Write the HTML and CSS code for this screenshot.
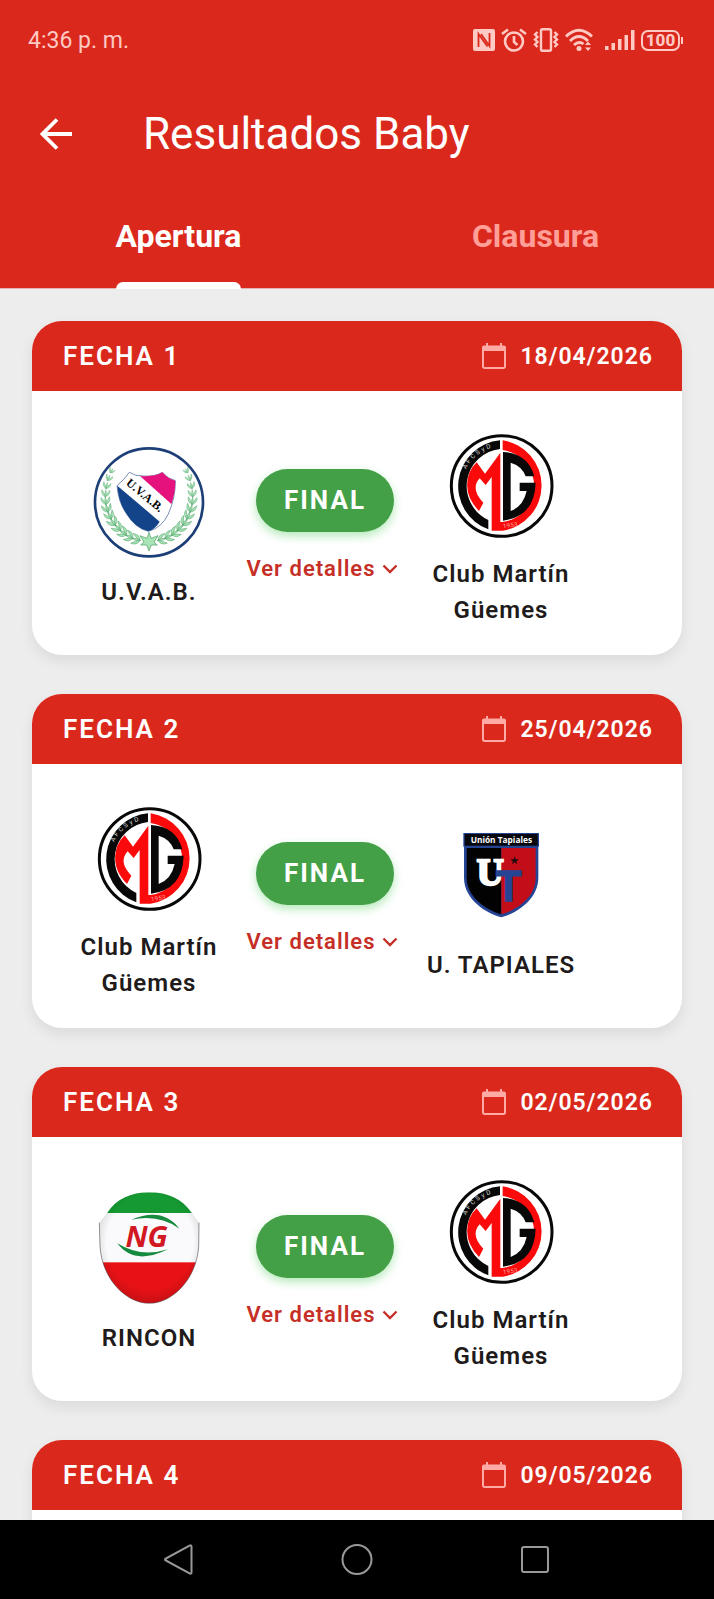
FILE: index.html
```html
<!DOCTYPE html>
<html lang="es">
<head>
    <meta charset="UTF-8">
    <meta name="viewport" content="width=device-width, initial-scale=1.0">
    <title>Resultados Baby</title>
    <link rel="stylesheet" href="styles.css">
</head>
<body>

    <!-- Shared icons -->
    <svg class="sprite" aria-hidden="true">
        <symbol id="calendar" viewBox="0 0 24 26">
            <path d="M1 5h22v18.500a1.500 1.500 0 0 1-1.500 1.500h-19A1.500 1.500 0 0 1 1 23.500z" fill="none" stroke="currentColor" stroke-width="2"/>
            <path d="M0 4.500a2 2 0 0 1 2-2h20a2 2 0 0 1 2 2V8H0zM4 0h2v4H4zM18 0h2v4h-2z" fill="currentColor"/>
        </symbol>

        <symbol id="chevron" viewBox="0 0 16 10">
            <path d="M1.500 1.500 8 8l6.500-6.500" fill="none" stroke="currentColor" stroke-width="2.400"/>
        </symbol>

        <symbol id="leaves" viewBox="0 0 40 30" overflow="visible">
            <g fill="#a9e4b7" stroke="#459b60" stroke-width="1.400">
                <path d="M24 15Q12 11 -1 0Q18 -3 24 15Z"/>
                <path d="M24 15Q12 19 -1 30Q18 33 24 15Z"/>
                <path d="M26 15Q12 21 -2 15Q12 9 26 15Z"/>
            </g>
        </symbol>

        <symbol id="mg-shapes" viewBox="15 8 336 336">
            <circle cx="185" cy="182" r="151" fill="#fff" stroke="#080808" stroke-width="9"/>
            <!-- left band -->
            <path d="M180 45V71A112 112 0 0 0 145 284V312A138 138 0 0 1 180 45Z" fill="#080808"/>
            <!-- right band and M -->
            <path d="M188 45A137 137 0 0 1 188 316H155V155L137 179L119 159Q90 191 130 232L117 257Q66 205 88 142Q96 124 110 111L135 145L181 82V290H188A109 109 0 0 0 188 74Z" fill="#fa0a0a"/>
            <!-- G -->
            <path d="M189 80Q264 84 283 153H257Q246 122 212 112V257Q250 243 260 197H239V172H287Q284 274 189 286Z" fill="#080808"/>
        </symbol>

        <path id="mg-arc" d="M78 132A118 118 0 0 1 182 64" fill="none"/>
    </svg>

    <header class="header">
        <div class="status-bar">
            <span class="clock">4:36 p. m.</span>
            <div class="status-icons">
                <svg width="22" height="22" viewBox="0 0 22 22" aria-hidden="true">
                    <rect width="22" height="22" rx="2" fill="currentColor"/>
                    <path d="M5.500 18V5l9 12.500M8 5l8.500 12V4" fill="none" stroke="#da291c" stroke-width="1.800"/>
                </svg>
                <svg width="26" height="24" viewBox="0 0 26 24" aria-hidden="true">
                    <g fill="none" stroke="currentColor" stroke-width="2.600">
                        <circle cx="13" cy="13.500" r="9"/>
                        <path d="M13 8v6l3.500 3M1 6l6-4.500M25 6l-6-4.500"/>
                    </g>
                </svg>
                <svg width="26" height="24" viewBox="0 0 26 24" aria-hidden="true">
                    <g fill="none" stroke="currentColor" stroke-width="2.400">
                        <rect x="8" y="1.200" width="10" height="21.600" rx="1.500"/>
                        <path d="M4.500 4L2 6.500 4.500 9 2 11.500 4.500 14 2 16.500 4.500 19M21.500 4L24 6.500 21.500 9 24 11.500 21.500 14 24 16.500 21.500 19"/>
                    </g>
                </svg>
                <svg width="28" height="24" viewBox="0 0 28 24" aria-hidden="true">
                    <path d="M1 8.500Q14-4 27 8.500M5 13Q14 4 23 13M9 17Q14 12.500 18.500 16" fill="none" stroke="currentColor" stroke-width="2.800"/>
                    <circle cx="14" cy="20.500" r="2.500" fill="currentColor"/>
                    <path d="M20 17l3-3.500 3 3.500zM20 19.500l3 3.500 3-3.500z" fill="currentColor"/>
                </svg>
                <svg class="signal" width="30" height="20" viewBox="0 0 30 20" aria-hidden="true">
                    <path d="M0 16h3.500v4H0zM6.500 13H10v7H6.500zM13 9h3.500v11H13zM19.500 5H23v15h-3.500zM26 0h3.500v20H26z" fill="currentColor"/>
                </svg>
                <div class="battery">100</div>
            </div>
        </div>

        <div class="app-bar">
            <button class="back" type="button" aria-label="Volver">
                <svg width="32" height="32" viewBox="0 0 32 32" aria-hidden="true">
                    <path d="M32 16H3M17 1.500L2.500 16 17 30.500" fill="none" stroke="currentColor" stroke-width="3.800"/>
                </svg>
            </button>
            <h1>Resultados Baby</h1>
        </div>

        <nav class="tabs">
            <a class="tab active" href="#apertura"><span>Apertura</span></a>
            <a class="tab" href="#clausura"><span>Clausura</span></a>
        </nav>
    </header>

    <main class="results">
        <article class="card">
            <div class="card-header">
                <h2>FECHA 1</h2>
                <div class="date"><svg class="calendar"><use href="#calendar"/></svg>18/04/2026</div>
            </div>
            <div class="match">
                <div class="team">
                    <svg class="crest" viewBox="39 31 336 336">
                        <circle cx="207" cy="200" r="162" fill="#fff" stroke="#1d3f78" stroke-width="8"/>
                        <g id="laurel">
                            <use href="#leaves" x="187" y="302" width="40" height="30" transform="rotate(14 207 190)"/>
                            <use href="#leaves" x="187" y="302" width="40" height="30" transform="rotate(24 207 190)"/>
                            <use href="#leaves" x="187" y="302" width="40" height="30" transform="rotate(34 207 190)"/>
                            <use href="#leaves" x="187" y="302" width="40" height="30" transform="rotate(44 207 190)"/>
                            <use href="#leaves" x="187" y="303" width="40" height="30" transform="rotate(54 207 190)"/>
                            <use href="#leaves" x="187" y="304" width="40" height="28" transform="rotate(64 207 190)"/>
                            <use href="#leaves" x="187" y="305" width="40" height="28" transform="rotate(74 207 190)"/>
                            <use href="#leaves" x="187" y="307" width="38" height="26" transform="rotate(84 207 190)"/>
                            <use href="#leaves" x="187" y="309" width="38" height="24" transform="rotate(94 207 190)"/>
                            <use href="#leaves" x="187" y="312" width="36" height="22" transform="rotate(104 207 190)"/>
                            <use href="#leaves" x="187" y="316" width="34" height="20" transform="rotate(114 207 190)"/>
                            <use href="#leaves" x="187" y="322" width="30" height="17" transform="rotate(123 207 190)"/>
                        </g>
                        <use href="#laurel" transform="matrix(-1 0 0 1 414 0)"/>
                        <path d="M207 290L213 308L234 300L222 319L232 328L214 328L207 346L200 328L182 328L192 319L180 300L201 308Z" fill="#a9e4b7" stroke="#459b60" stroke-width="2"/>
                        <path d="M111 150Q130 135 148 110Q166 122 190 121Q224 124 247 110Q264 130 286 135Q287 185 265 235Q246 276 205 287Q165 277 140 235Q115 200 111 150Z" fill="#fff" stroke="#36558f" stroke-width="2"/>
                        <path d="M180 121Q224 124 247 110Q264 130 286 135Q286 172 274 205Z" fill="#e5127d"/>
                        <path d="M112 150L239 258Q226 280 205 287Q165 277 140 235Q115 200 112 150Z" fill="#134489"/>
                        <text class="uvab-text" transform="translate(136 145) rotate(40)">U.V.A.B.</text>
                    </svg>
                    <p>U.V.A.B.</p>
                </div>
                <div class="status">
                    <span class="badge">FINAL</span>
                    <button class="details" type="button">Ver detalles<svg class="chevron"><use href="#chevron"/></svg></button>
                </div>
                <div class="team">
                    <svg class="crest" viewBox="15 8 336 336">
                        <use href="#mg-shapes" x="15" y="8" width="336" height="336"/>
                        <text class="mg-text"><textPath href="#mg-arc">A F C S y D</textPath></text>
                        <text class="mg-year" transform="translate(190 309) rotate(-8)">1953</text>
                    </svg>
                    <p>Club Martín Güemes</p>
                </div>
            </div>
        </article>

        <article class="card">
            <div class="card-header">
                <h2>FECHA 2</h2>
                <div class="date"><svg class="calendar"><use href="#calendar"/></svg>25/04/2026</div>
            </div>
            <div class="match">
                <div class="team">
                    <svg class="crest" viewBox="15 8 336 336">
                        <use href="#mg-shapes" x="15" y="8" width="336" height="336"/>
                        <text class="mg-text"><textPath href="#mg-arc">A F C S y D</textPath></text>
                        <text class="mg-year" transform="translate(190 309) rotate(-8)">1953</text>
                    </svg>
                    <p>Club Martín Güemes</p>
                </div>
                <div class="status">
                    <span class="badge">FINAL</span>
                    <button class="details" type="button">Ver detalles<svg class="chevron"><use href="#chevron"/></svg></button>
                </div>
                <div class="team">
                    <svg class="crest" viewBox="15 11 336 336">
                        <path d="M70 53H297V94H295V187C295 254 226 295 184 306C142 295 72 254 72 187V94H70Z" fill="#254494"/>
                        <path d="M74 56H293V91H74Z" fill="#06080d"/>
                        <path d="M80 98H184V297C146 286 80 250 80 187Z" fill="#020203"/>
                        <path d="M184 98H287V187C287 250 222 286 184 297Z" fill="#c30d18"/>
                        <text class="tapiales-name" x="184" y="82">Unión Tapiales</text>
                        <text class="tapiales-u" x="151" y="208">U</text>
                        <text class="tapiales-t" x="206" y="256">T</text>
                        <path d="M224 123L227 132H237L229 138L232 147L224 141L216 147L219 138L211 132H221Z" fill="#1b0b10"/>
                    </svg>
                    <p>U. TAPIALES</p>
                </div>
            </div>
        </article>

        <article class="card">
            <div class="card-header">
                <h2>FECHA 3</h2>
                <div class="date"><svg class="calendar"><use href="#calendar"/></svg>02/05/2026</div>
            </div>
            <div class="match">
                <div class="team">
                    <svg class="crest" viewBox="9 36 336 336">
                        <defs>
                            <clipPath id="rincon-shape">
                                <path d="M178 37C235 37 277 58 305 98L327 128L326 200C319 300 245 370 178 370C110 370 37 300 30 200L28 128L52 98C78 58 122 37 178 37Z"/>
                            </clipPath>
                            <radialGradient id="rincon-shade" cx="50%" cy="45%" r="58%">
                                <stop offset="70%" stop-color="#000" stop-opacity="0"/>
                                <stop offset="100%" stop-color="#000" stop-opacity="0.200"/>
                            </radialGradient>
                        </defs>
                        <g clip-path="url(#rincon-shape)">
                            <rect x="20" y="30" width="320" height="70" fill="#159a33"/>
                            <rect x="20" y="99" width="320" height="148" fill="#fafafc"/>
                            <rect x="20" y="247" width="320" height="130" fill="#e81216"/>
                            <rect x="20" y="30" width="320" height="347" fill="url(#rincon-shade)"/>
                        </g>
                        <path d="M28 128L30 200C37 300 110 370 178 370C245 370 319 300 326 200L327 128" fill="none" stroke="#55484a" stroke-opacity="0.600" stroke-width="3"/>
                        <path d="M124 119Q218 80 268 146Q208 102 124 119Z" fill="#168a3e"/>
                        <path d="M82 190Q132 258 234 208Q152 234 82 190Z" fill="#168a3e"/>
                        <text class="rincon-text" x="170" y="200">NG</text>
                    </svg>
                    <p>RINCON</p>
                </div>
                <div class="status">
                    <span class="badge">FINAL</span>
                    <button class="details" type="button">Ver detalles<svg class="chevron"><use href="#chevron"/></svg></button>
                </div>
                <div class="team">
                    <svg class="crest" viewBox="15 8 336 336">
                        <use href="#mg-shapes" x="15" y="8" width="336" height="336"/>
                        <text class="mg-text"><textPath href="#mg-arc">A F C S y D</textPath></text>
                        <text class="mg-year" transform="translate(190 309) rotate(-8)">1953</text>
                    </svg>
                    <p>Club Martín Güemes</p>
                </div>
            </div>
        </article>

        <article class="card">
            <div class="card-header">
                <h2>FECHA 4</h2>
                <div class="date"><svg class="calendar"><use href="#calendar"/></svg>09/05/2026</div>
            </div>
            <div class="match"></div>
        </article>
    </main>

    <footer class="nav-bar">
        <button type="button" aria-label="Atrás">
            <svg width="32" height="32" viewBox="0 0 32 32"><path d="M27 1.500a1 1 0 0 1 1.500 1v26a1 1 0 0 1-1.500 1L3 16.500a1 1 0 0 1 0-2z"/></svg>
        </button>
        <button type="button" aria-label="Inicio">
            <svg width="32" height="32" viewBox="0 0 32 32"><circle cx="16" cy="15.500" r="14.500"/></svg>
        </button>
        <button type="button" aria-label="Recientes">
            <svg width="32" height="32" viewBox="0 0 32 32"><rect x="3" y="3" width="26" height="25" rx="2"/></svg>
        </button>
    </footer>

</body>
</html>
```
FILE: styles.css
```css
/* General Styles */
* {
    box-sizing: border-box;
}

body {
    font-family: Roboto, sans-serif;
    background-color: #ededed;
    color: #201a1a;
    display: flex;
    flex-direction: column;
    height: 100vh;
    margin: 0;
}

h1,
h2,
p {
    margin: 0;
}

button {
    font-family: inherit;
    background: none;
    border: none;
    padding: 0;
    cursor: pointer;
}

.sprite {
    position: absolute;
    width: 0;
    height: 0;
}

/* Header */
.header {
    background-color: #da291c;
    color: #fff;
    border-bottom: 1px solid #e2b5b2;
}

.status-bar {
    display: flex;
    justify-content: space-between;
    align-items: center;
    height: 80px;
    padding: 0 30px 0 28px;
    color: #ffc9c4;
}

.clock {
    font-size: 23px;
}

.status-icons {
    display: flex;
    align-items: center;
    gap: 6px;
}

.signal {
    margin-left: 6px;
}

.battery {
    position: relative;
    width: 39px;
    height: 21px;
    margin-right: 4px;
    border: 2px solid currentColor;
    border-radius: 7px;
    font-size: 17px;
    font-weight: 800;
    line-height: 17px;
    text-align: center;
}

.battery::after {
    content: "";
    position: absolute;
    top: 5px;
    right: -5px;
    width: 2px;
    height: 7px;
    background-color: currentColor;
}

.app-bar {
    display: flex;
    align-items: center;
    gap: 71px;
    height: 108px;
    padding: 0 40px;
}

.back {
    display: flex;
    color: #fff;
}

h1 {
    font-size: 44px;
    font-weight: 400;
}

/* Tabs */
.tabs {
    display: flex;
    height: 100px;
}

.tab {
    flex: 1;
    display: flex;
    justify-content: center;
    color: #ff9f98;
    font-size: 32px;
    font-weight: 700;
    line-height: 96px;
    text-decoration: none;
}

.tab.active {
    color: #fff;
}

.tab.active span {
    position: relative;
}

.tab.active span::after {
    content: "";
    position: absolute;
    left: 0;
    right: 0;
    bottom: -1px;
    height: 7px;
    background-color: #fff;
    border-radius: 7px 7px 0 0;
}

/* Match Cards */
.results {
    flex: 1;
    min-height: 0;
    overflow-y: auto;
    scrollbar-width: none;
    padding: 32px;
}

.card {
    margin-bottom: 39px;
    background-color: #fff;
    border-radius: 30px;
    box-shadow: 0 6px 14px rgba(0, 0, 0, 0.08);
}

.card-header {
    display: flex;
    justify-content: space-between;
    align-items: center;
    height: 70px;
    padding: 0 29px 0 31px;
    background-color: #da291c;
    border-radius: 30px 30px 0 0;
    color: #fff;
}

h2 {
    font-size: 26px;
    font-weight: 600;
    letter-spacing: 2px;
}

.date {
    display: flex;
    align-items: center;
    gap: 14px;
    font-size: 23px;
    font-weight: 600;
    letter-spacing: 1px;
}

.calendar {
    width: 24px;
    height: 26px;
    color: #ffaaa4;
}

.match {
    display: grid;
    grid-template-columns: 11fr 11fr 11fr 4fr;
    align-items: center;
    min-height: 264px;
    padding: 37px 29px 27px;
}

.team,
.status {
    display: flex;
    flex-direction: column;
    align-items: center;
}

.team {
    gap: 16px;
    padding: 0 12px;
    font-size: 24px;
    font-weight: 600;
    letter-spacing: 1px;
    line-height: 36px;
    text-align: center;
}

.crest {
    width: 112px;
    height: 112px;
}

.status {
    gap: 19px;
}

.badge {
    padding: 0 28px;
    background-color: #43a047;
    border-radius: 32px;
    box-shadow: 0 4px 10px rgba(67, 200, 80, 0.4);
    color: #fff;
    font-size: 26px;
    font-weight: 700;
    letter-spacing: 2px;
    line-height: 63px;
}

.details {
    display: flex;
    align-items: center;
    gap: 6px;
    padding-right: 6px;
    color: #c62f27;
    font-size: 22px;
    font-weight: 600;
    letter-spacing: 1px;
    line-height: 36px;
    white-space: nowrap;
}

.chevron {
    width: 16px;
    height: 10px;
}

/* Crest Lettering */
.uvab-text {
    font-family: "Liberation Serif", serif;
    font-size: 36px;
    font-weight: 700;
    letter-spacing: 0;
}

.mg-text {
    fill: #ddd;
    font-size: 19px;
    font-weight: 400;
}

.mg-year {
    fill: #ffb0a8;
    font-size: 18px;
    font-weight: 400;
}

.tapiales-name {
    fill: #fff;
    font-family: "Open Sans", sans-serif;
    font-size: 25px;
    font-weight: 700;
    letter-spacing: 0;
    text-anchor: middle;
}

.tapiales-u {
    fill: #fff;
    stroke: #fff;
    stroke-width: 7;
    font-family: "Liberation Serif", serif;
    font-size: 112px;
    font-weight: 700;
    letter-spacing: 0;
    text-anchor: middle;
}

.tapiales-t {
    fill: #254494;
    stroke: #254494;
    stroke-width: 4;
    font-family: Roboto, sans-serif;
    font-size: 128px;
    font-weight: 700;
    letter-spacing: 0;
    text-anchor: middle;
}

.rincon-text {
    fill: #d21822;
    font-family: "Liberation Sans Narrow", "Open Sans", sans-serif;
    font-size: 88px;
    font-style: italic;
    font-weight: 700;
    letter-spacing: 0;
    text-anchor: middle;
}

/* System Navigation */
.nav-bar {
    display: flex;
    justify-content: center;
    align-items: center;
    gap: 146px;
    height: 79px;
    background-color: #000;
}

.nav-bar button {
    display: flex;
}

.nav-bar svg {
    fill: none;
    stroke: #999;
    stroke-width: 2;
}
```
